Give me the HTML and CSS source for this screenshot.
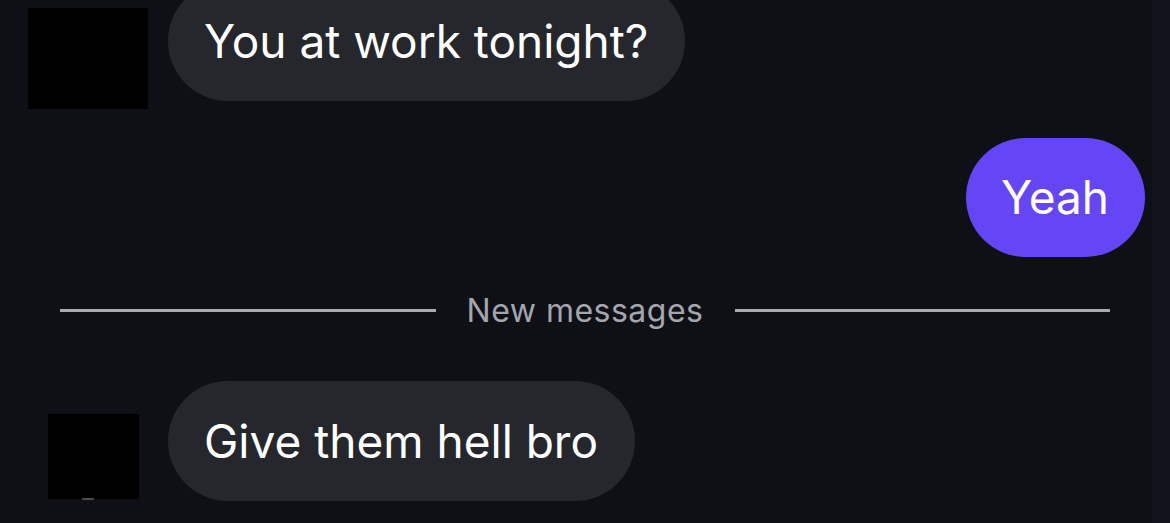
FILE: index.html
```html
<!DOCTYPE html>
<html>
<head>
<meta charset="utf-8">
<link rel="stylesheet" href="styles.css">
</head>
<body>
<div class="chat">
  <div class="row row-first">
    <div class="avatar avatar-a"></div>
    <div class="bubble in">You at work tonight?</div>
  </div>
  <div class="row row-out">
    <div class="bubble out">Yeah</div>
  </div>
  <div class="divider">
    <span class="line"></span>
    <span class="divider-text">New messages</span>
    <span class="line"></span>
  </div>
  <div class="row row-last">
    <div class="avatar avatar-b"><span class="avatar-mark"></span></div>
    <div class="bubble in">Give them hell bro</div>
  </div>
</div>
</body>
</html>
```

FILE: styles.css
```css
html, body {
  margin: 0;
  padding: 0;
  background: #0e1016;
  overflow: hidden;
}
body {
  width: 1170px;
  height: 523px;
  font-family: Inter, "Noto Sans", sans-serif;
  color: #ffffff;
}
.chat {
  display: flex;
  flex-direction: column;
  height: 523px;
  border-right: 18px solid #11141a;
  box-sizing: border-box;
}
.row {
  display: flex;
  align-items: flex-start;
}
.row-first {
  margin-top: -19px;
  gap: 20px;
}
.row-out {
  justify-content: flex-end;
  margin-top: 29px;
  padding-right: 7px;
}
.row-last {
  margin-top: 51px;
  gap: 29px;
}
.avatar {
  background: #000000;
  flex: none;
  position: relative;
}
.avatar-a {
  margin-left: 28px;
  width: 120px;
  height: 101px;
  margin-top: 27px;
}
.avatar-b {
  margin-left: 48px;
  width: 91px;
  height: 85px;
  margin-top: 33px;
}
.avatar-mark {
  position: absolute;
  left: 34px;
  bottom: -1px;
  width: 12px;
  height: 2px;
  background: #4a4c52;
  border-radius: 1px;
}
.bubble {
  height: 120px;
  line-height: 120px;
  padding: 0 37px 0 36px;
  border-radius: 60px;
  font-size: 46px;
  white-space: nowrap;
}
.bubble.in {
  background: #25272d;
}
.bubble.out {
  background: #6446f6;
  height: 119px;
  line-height: 119px;
  padding: 0 36px 0 35px;
}
.divider {
  display: flex;
  align-items: center;
  gap: 31px;
  height: 40px;
  margin-top: 33px;
  padding: 0 42px 0 60px;
}
.line {
  flex: 1;
  height: 3px;
  background: #a8abb2;
}
.divider-text {
  font-size: 32px;
  color: #a3a6ad;
  letter-spacing: 0.5px;
}
```
